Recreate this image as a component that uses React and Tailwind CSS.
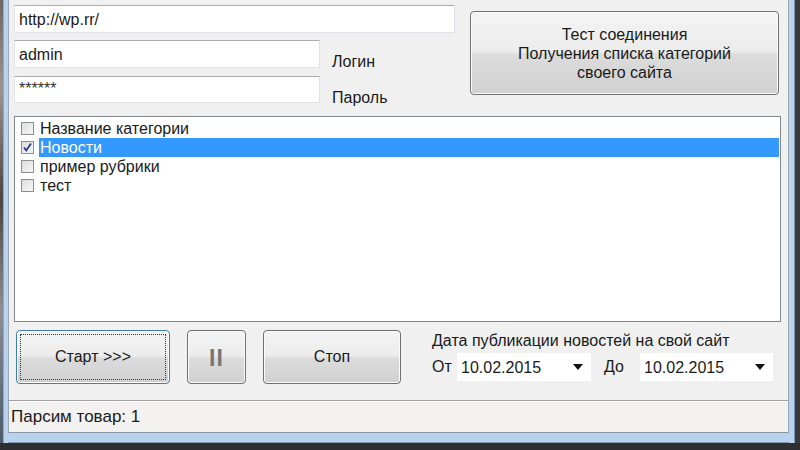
import React from 'react';

const font = { fontFamily: '"Liberation Sans", Arial, sans-serif' };

function Field({ value, className = '' }) {
  return (
    <div className={`bg-white border border-[#e2e3ea] border-t-[#abadb3] flex items-center px-[4px] text-[16px] leading-[19px] text-[#1a1a1a] ${className}`}>
      {value}
    </div>
  );
}

function Btn({ children, className = '', focused = false }) {
  return (
    <div
      className={`rounded-[4px] border ${focused ? 'border-[#3c7fb1]' : 'border-[#707070]'} bg-[linear-gradient(to_bottom,#f4f4f4_0%,#ececec_48%,#dcdcdc_52%,#d0d0d0_100%)] shadow-[inset_0_0_0_1px_#fbfbfb] flex items-center justify-center text-[16px] text-[#1a1a1a] ${className}`}
    >
      {focused ? (
        <div className="w-[calc(100%-6px)] h-[calc(100%-6px)] border border-dotted border-[#1f3f5f] flex items-center justify-center">
          {children}
        </div>
      ) : (
        children
      )}
    </div>
  );
}

function Check({ checked }) {
  return (
    <div className="w-[13px] h-[13px] border border-[#8e8f8f] bg-[linear-gradient(135deg,#dcdcdc,#f8f8f8)] flex items-center justify-center shrink-0">
      {checked && (
        <svg width="11" height="11" viewBox="0 0 11 11">
          <path d="M2 5.5 L4.3 8.5 L9 1.5" fill="none" stroke="#2a3a8c" strokeWidth="1.8" />
        </svg>
      )}
    </div>
  );
}

function Item({ label, checked, selected }) {
  return (
    <div className="flex items-center h-[19px] pl-[6px]">
      <Check checked={checked} />
      <div
        className={`ml-[5px] flex-1 h-full flex items-center pl-[1px] text-[16px] leading-[19px] ${selected ? 'bg-[#3399ff] text-white' : 'text-[#1a1a1a]'}`}
      >
        {label}
      </div>
    </div>
  );
}

function DateBox({ value, className = '' }) {
  return (
    <div className={`bg-white flex items-center justify-between pl-[4px] pr-[8px] h-[28px] text-[16px] leading-[19px] text-[#1a1a1a] ${className}`}>
      <span>{value}</span>
      <svg width="10" height="6" viewBox="0 0 10 6">
        <path d="M0 0 H10 L5 6 Z" fill="#111" />
      </svg>
    </div>
  );
}

export default function App() {
  return (
    <div className="w-[800px] h-[450px] overflow-hidden bg-[#2c2c2e] flex flex-col" style={font}>
      <div className="flex h-[443px]">
        <div className="w-[3px] bg-[linear-gradient(to_bottom,#6d6766,#9a9593_20%,#4a4444_45%,#8b8e95_70%,#4c5b6c)]" />
        <div className="w-[5px] bg-[#b9d3ee] border-l border-[#8aa9cc]" />
        <div className="flex-1 flex flex-col">
          <div className="h-[433px] bg-[#f0f0f0] flex flex-col border-l border-r border-[#9aa6b4]">
            {/* top section */}
            <div className="flex pl-[5px]">
              <div className="w-[441px] pt-[5px] flex flex-col">
                <Field value="http://wp.rr/" className="h-[28px]" />
                <div className="flex h-[28px] mt-[7px]">
                  <Field value="admin" className="w-[306px] h-[28px]" />
                  <div className="ml-[12px] mt-[12px] leading-[19px] text-[16px] text-[#1a1a1a]">Логин</div>
                </div>
                <div className="flex h-[27px] mt-[8px]">
                  <Field value="******" className="w-[306px] h-[27px] items-start pt-[2px] text-[14px] text-[#333]" />
                  <div className="ml-[12px] mt-[12px] leading-[19px] text-[16px] text-[#1a1a1a]">Пароль</div>
                </div>
              </div>
              <Btn className="ml-[15px] mt-[11px] w-[309px] h-[84px] flex-col leading-[19px] text-center">
                <div>Тест соединения</div>
                <div>Получения списка категорий</div>
                <div>своего сайта</div>
              </Btn>
            </div>

            {/* list */}
            <div className="ml-[5px] mt-[13px] w-[767px] h-[206px] bg-white border border-[#828790] pt-[2px] pr-[1px]">
              <Item label="Название категории" />
              <Item label="Новости" checked selected />
              <Item label="пример рубрики" />
              <Item label="тест" />
            </div>

            {/* controls */}
            <div className="flex mt-[8px] pl-[7px] h-[70px]">
              <Btn focused className="w-[154px] h-[54px]">Старт &gt;&gt;&gt;</Btn>
              <Btn className="ml-[17px] w-[59px] h-[54px] text-[#777] text-[23px] font-bold leading-none">
                <span className="tracking-[1px] pt-[2px]">II</span>
              </Btn>
              <Btn className="ml-[17px] w-[138px] h-[54px]">Стоп</Btn>
              <div className="ml-[31px] flex flex-col">
                <div className="text-[16px] text-[#1a1a1a] leading-[19px] mt-[1px]">Дата публикации новостей на свой сайт</div>
                <div className="flex items-center mt-[3px]">
                  <span className="text-[16px] text-[#1a1a1a] w-[25px]">От</span>
                  <DateBox value="10.02.2015" className="w-[134px]" />
                  <span className="text-[16px] text-[#1a1a1a] ml-[13px] w-[36px]">До</span>
                  <DateBox value="10.02.2015" className="w-[133px]" />
                </div>
              </div>
            </div>

            {/* status bar */}
            <div className="flex-1 border-t border-[#a0a0a0] shadow-[inset_0_1px_0_#ffffff] bg-[#f4f2f1] flex items-center pl-[2px] text-[17px] text-[#1a1a1a] border-b border-b-[#8a96a4]">
              Парсим товар: 1
            </div>
          </div>
          <div className="flex-1 bg-[#b9d3ee] border-b border-[#7d95b0]" />
        </div>
        <div className="w-[6px] bg-[#b9d3ee] border-r border-[#7d95b0]" />
        <div className="w-[5px] bg-[#3a3a3c]" />
      </div>
      <div className="flex-1 bg-[#2e2e30]" />
    </div>
  );
}
